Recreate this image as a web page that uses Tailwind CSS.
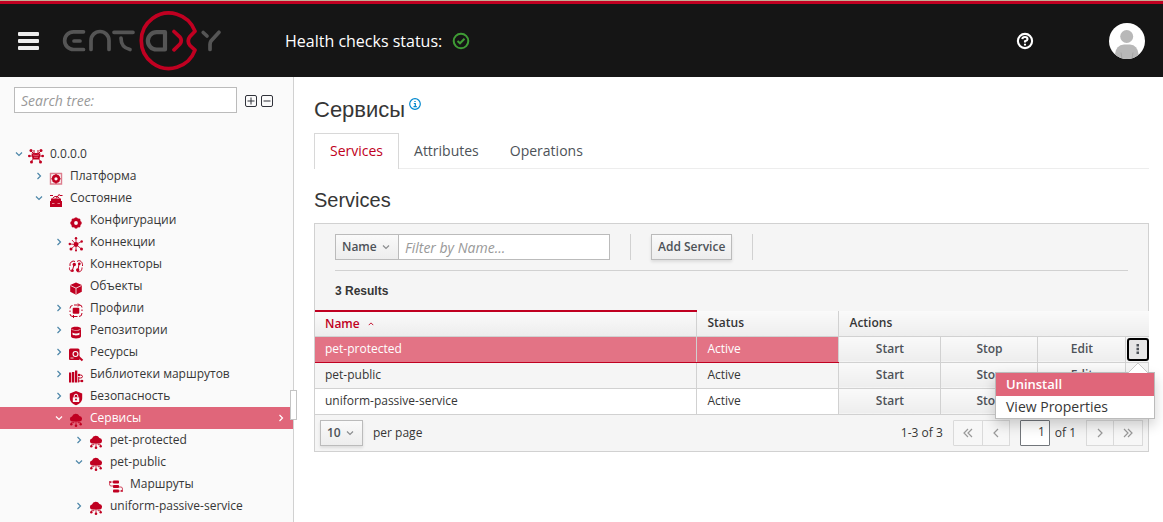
<!DOCTYPE html>
<html lang="ru">
<head>
<meta charset="utf-8">
<title>Entaxy</title>
<script src="https://cdn.jsdelivr.net/npm/@tailwindcss/browser@4"></script>
</head>
<body class="flex min-h-screen flex-col overflow-x-hidden bg-white font-['Open_Sans',sans-serif] text-xs text-[#363636]">
<svg class="hidden" aria-hidden="true">
  <symbol id="right" viewBox="0 0 8 8"><path d="M2.5 1 5.5 4 2.5 7" fill="none" stroke="currentColor" stroke-width="1.2"/></symbol>
  <symbol id="down" viewBox="0 0 8 8"><path d="M1 2.5 4 5.500 7 2.500" fill="none" stroke="currentColor" stroke-width="1.2"/></symbol>
  <symbol id="root" viewBox="0 0 16 16"><path d="M3 3 6 6M13 3 10 6M3 14 6 10M13 14 10 10M1 8H15M6 2V6M10 2V6" stroke="currentColor" stroke-width="1"/><path d="M3.500 5.500Q8 4.500 12.500 5.500L11.500 11Q8 12 4.500 11Z"/><circle cx="3" cy="2.500" r="1.500"/><circle cx="13" cy="2.500" r="1.500"/><circle cx="3.500" cy="14" r="1.500"/><circle cx="12.500" cy="14" r="1.500"/><circle cx="1.300" cy="8" r="1.300"/><circle cx="14.700" cy="8" r="1.300"/><path d="M5 7Q8 8 11 7M6 9.300H10" fill="none" stroke="#f3a5b0" stroke-width=".6"/></symbol>
  <symbol id="platform" viewBox="0 0 16 16"><path d="M2 3.500H14M2.500 3V14H13.500V3" fill="none" stroke="currentColor" stroke-width="1.400" opacity=".5"/><circle cx="8" cy="8.800" r="2.900" fill="none" stroke="currentColor" stroke-width="2.600"/><path d="M8 4.200V5M8 12.500V13.400M3.500 8.800H4.500M11.500 8.800H12.500M4.900 5.700 5.500 6.300M11.100 5.700 10.500 6.300M4.900 11.900 5.500 11.300M11.100 11.900 10.500 11.300" stroke="currentColor" stroke-width="1.600"/></symbol>
  <symbol id="state" viewBox="0 0 16 16"><path d="M4.500 6.500A4 4 0 0 1 11.500 6.500M8 6.500 11.500 2M2 3.500H5M11.500 3.500H14.500" fill="none" stroke="currentColor" stroke-width="1"/><path d="M3 6.500H13V9H14V15H2V9H3Z"/><path d="M4 11.500H6.500M9.500 11.500H12" stroke="#f3a5b0" stroke-width=".8"/></symbol>
  <symbol id="gear" viewBox="0 0 16 16"><circle cx="8" cy="9" r="3.500" fill="none" stroke="currentColor" stroke-width="3.200"/><path d="M8 3.400V5M8 13V14.600M2.400 9H4M12 9H13.600M4.100 5.100 5 6M11.900 5.100 11 6M4.100 12.900 5 12M11.900 12.900 11 12" stroke="currentColor" stroke-width="2.400"/></symbol>
  <symbol id="conn" viewBox="0 0 16 16"><path d="M8 8.500 8 2M8 8.500 13.500 5.500M8 8.500 13.500 13M8 8.500 8 14.500M8 8.500 3 13M8 8.500 2 8M8 8.500 4 4" stroke="currentColor" stroke-width=".8"/><circle cx="8" cy="8.500" r="2.400"/><circle cx="8" cy="2.200" r="1.200"/><circle cx="13.700" cy="5.500" r="1.200"/><circle cx="13.500" cy="13" r="1.500"/><circle cx="8" cy="14.600" r="1"/><circle cx="3" cy="13" r="1.500"/><circle cx="1.800" cy="8" r="1.200"/></symbol>
  <symbol id="connector" viewBox="0 0 16 16"><path d="M7 3.500A3.500 4 0 0 0 2 8M1.500 9.500C1 13 4 14.500 6 12.500M9 3.500C12 1 15 4.500 14.500 8M14 9.500C14 13 12 14.500 9 13.500M6 7 4.500 12M11 6 10 12" fill="none" stroke="currentColor" stroke-width="1"/><circle cx="6.300" cy="6.500" r="1.700"/><circle cx="11.300" cy="5.800" r="1.400"/><circle cx="9.700" cy="12" r="1.700"/><circle cx="4.300" cy="12.500" r="1.200"/></symbol>
  <symbol id="cube" viewBox="0 0 16 16"><path d="M8 2.500 13.800 5V11.800L8 14.800 2.200 11.800V5Z"/><path d="M2.500 5.500 8 8.200 13.500 5.500M8 8.200V14.500" fill="none" stroke="#fafafa" stroke-width=".8"/></symbol>
  <symbol id="profile" viewBox="0 0 16 16"><rect x="4.700" y="5.700" width="6.600" height="6" rx="1"/><path d="M6 3H11.500Q14 3 14 5.500M14 7.500V9M14 11Q14 14.500 11 14.500M9.500 14.500H5Q2 14.500 2 12M2 10V8.500M2 6.500Q2 3.500 4.500 3.500M10 1.500 11.500 3 10 4.500M6 13 4.500 14.500 6 16" fill="none" stroke="currentColor" stroke-width="1"/></symbol>
  <symbol id="repo" viewBox="0 0 16 16"><path d="M3 4.500C3 2 13 2 13 4.500V12.500C13 15 3 15 3 12.500Z"/><path d="M3.500 5C5 6.500 11 6.500 12.500 5V5.600C11 7.200 5 7.200 3.500 5.600ZM4.500 8.500C6 9.800 10 9.800 11.500 8.500V10.500C10 11.700 6 11.700 4.500 10.500Z" fill="#fafafa"/></symbol>
  <symbol id="res" viewBox="0 0 16 16"><path d="M1 4Q1 2.500 2.500 2.500H10Q11.500 2.500 11.500 4V14H2Q1 14 1 13Z"/><circle cx="7.500" cy="8" r="3" fill="#fafafa"/><circle cx="7.500" cy="8" r="1.900"/><path d="M10.500 10.800 14.500 14.500" stroke="currentColor" stroke-width="2"/><path d="M2.500 12H5.500" stroke="#fafafa" stroke-width=".8"/></symbol>
  <symbol id="lib" viewBox="0 0 16 16"><path d="M1 4.500H3.300V14.500H1ZM4 4H6.300V14.500H4ZM7 2.500H9.300V14.500H7Z"/><path d="M10 7H12.500Q14.500 7 14.500 8.500T12.500 10H11M10 13H14M10.700 9V14.500" fill="none" stroke="currentColor" stroke-width="1"/><circle cx="14" cy="13" r="1.300"/><circle cx="11" cy="7" r="1.200"/></symbol>
  <symbol id="shield" viewBox="0 0 16 16"><path d="M8 1 14.200 3.500V8C14.200 12 11 14.200 8 15.300 5 14.200 1.800 12 1.800 8V3.500Z"/><rect x="4.800" y="7.200" width="6.400" height="4.800" rx=".5" fill="#fafafa"/><path d="M6.200 7V6a1.800 1.800 0 0 1 3.600 0V7" fill="none" stroke="#fafafa" stroke-width="1"/><circle cx="8" cy="9.600" r="1"/></symbol>
  <symbol id="cloud" viewBox="0 0 16 16"><path d="M4 9.500A2.600 2.600 0 0 1 4 4.400 4 4 0 0 1 11.400 4 2.800 2.800 0 0 1 12 9.500Z"/><path d="M8 9V13M6 9.500V10.700H3.500V12M10 9.500V10.700H12.500V12" fill="none" stroke="currentColor" stroke-width=".8"/><circle cx="3.300" cy="12.300" r="1.200"/><circle cx="8" cy="13.800" r="1.300"/><circle cx="12.700" cy="12.300" r="1.200"/></symbol>
  <symbol id="route" viewBox="0 0 16 16"><rect x="5" y="2.500" width="6" height="3" rx=".8"/><rect x="5" y="7" width="6" height="3" rx=".8"/><rect x="5" y="11.500" width="6" height="3" rx=".8"/><path d="M5 4H3Q1.500 4 1.500 6T3 8H5M11 9H13Q14.500 9 14.500 11T13 13H11" fill="none" stroke="currentColor" stroke-width=".7"/><circle cx="2" cy="4" r=".9"/><circle cx="14" cy="13" r=".9"/></symbol>
</svg>

<header class="flex h-[77px] shrink-0 items-center border-t border-[#bfae93] bg-[#151515]">
  <div class="flex w-full items-center self-stretch border-t-3 border-[#c00021]">
    <button type="button" aria-label="Menu" class="ml-4.5 flex w-[21px] flex-col gap-[3px]"><span class="h-1 w-full rounded-[1px] bg-[#ededed]"></span><span class="h-1 w-full rounded-[1px] bg-[#ededed]"></span><span class="h-1 w-full rounded-[1px] bg-[#ededed]"></span></button>
    <a href="#" aria-label="Entaxy" class="ml-5.5"><svg class="h-16 w-[164px]" viewBox="61 9 164 64" fill="none" stroke="#555" stroke-width="3.700" stroke-linecap="round" stroke-linejoin="round">
      <path d="M83.500 31.800H73.500a8.800 8.800 0 0 0 0 17.700H83.500M74 41H80M91 49.500V40.500a9 9 0 0 1 18 0V49.500M114 32.300H133M121 38c0 7 3 10 9 11.500M203.200 32.500 207 36M219 32.300 211 41Q210 42.500 210 44.500V49.500"/>
      <path d="M165 32.200H156.500a8.600 8.600 0 0 0 0 17.300H165Z" stroke-width="4.200"/>
      <path d="M174 31.500 180 37.200Q182.500 40.500 180 44L174 49.800M195 31.200A27.700 27.700 0 1 0 195 50.200L190 45.500Q186.500 40.800 190 36.500Z" stroke="#c00021"/>
    </svg></a>
    <p class="ml-[60px] text-base text-white">Health checks status:</p>
    <svg class="ml-2.5 size-4.5" viewBox="0 0 18 18" fill="none" stroke="#3f9c35" stroke-width="2"><circle cx="9" cy="9" r="7.300"/><path d="M5.500 9 8 11.300 12.500 6.800"/></svg>
    <button type="button" aria-label="Help" class="mr-[75px] ml-auto"><svg class="block size-4.5" viewBox="0 0 18 18" fill="none" stroke="#fff" stroke-width="2.100"><circle cx="9" cy="9" r="7.100"/><path d="M6.300 7.200Q6.500 5 9 5T11.500 7.200Q11.500 8.500 9 9.300V10.500"/><path d="M9 11.700V13.500"/></svg></button>
    <button type="button" aria-label="User" class="mr-4.5"><svg class="block size-9" viewBox="0 0 36 36"><defs><clipPath id="av"><circle cx="18" cy="18" r="18"/></clipPath></defs><g clip-path="url(#av)"><rect width="36" height="36" fill="#fff"/><circle cx="17.700" cy="13.500" r="6.500" fill="#b8b8b8"/><path d="M6 36V31Q7 22 15 21.500H21Q28.500 22 29.500 31V36Z" fill="#b8b8b8"/><path d="M12 29.500 13 36M24 29.500 23 36" stroke="#a5a5a5"/></g></svg></button>
  </div>
</header>

<div class="flex grow">
  <aside class="relative w-[294px] shrink-0 border-r border-[#d1d1d1] bg-[#fafafa] pt-2.5 text-[#363636]">
    <div class="flex items-center pl-3.5">
      <input type="text" aria-label="Search tree" placeholder="Search tree:" class="h-[26px] w-[223px] border border-[#bbb] bg-white px-1.5 text-sm placeholder:text-[#999] placeholder:italic">
      <button type="button" aria-label="Expand all" class="ml-2 pt-0.5"><svg class="block size-3" viewBox="0 0 12 12" fill="none" stroke="#30323a"><rect x=".5" y=".5" width="11" height="11" rx="1.500"/><path d="M2.500 6H9.500M6 2.500V9.500"/></svg></button>
      <button type="button" aria-label="Collapse all" class="ml-1 pt-0.5"><svg class="block size-3" viewBox="0 0 12 12" fill="none" stroke="#30323a"><rect x=".5" y=".5" width="11" height="11" rx="1.500"/><path d="M2.500 6H9.500"/></svg></button>
    </div>
    <ul role="tree" class="mt-[30px] [&>li]:flex [&>li]:h-[22px] [&>li]:items-center [&>li>svg:first-child]:mr-[5px] [&>li>svg:first-child]:size-2 [&>li>svg:first-child]:text-[#4c86a8] [&>li>svg:nth-child(2)]:mt-1 [&>li>svg:nth-child(2)]:mr-1.5 [&>li>svg:nth-child(2)]:size-4 [&>li>svg:nth-child(2)]:fill-[#c00021] [&>li>svg:nth-child(2)]:text-[#c00021]">
      <li role="treeitem" class="pl-[15px]"><svg><use href="#down"/></svg><svg><use href="#root"/></svg>0.0.0.0</li>
      <li role="treeitem" class="pl-[35px]"><svg><use href="#right"/></svg><svg><use href="#platform"/></svg>Платформа</li>
      <li role="treeitem" class="pl-[35px]"><svg><use href="#down"/></svg><svg><use href="#state"/></svg>Состояние</li>
      <li role="treeitem" class="pl-[55px]"><svg></svg><svg><use href="#gear"/></svg>Конфигурации</li>
      <li role="treeitem" class="pl-[55px]"><svg><use href="#right"/></svg><svg><use href="#conn"/></svg>Коннекции</li>
      <li role="treeitem" class="pl-[55px]"><svg></svg><svg><use href="#connector"/></svg>Коннекторы</li>
      <li role="treeitem" class="pl-[55px]"><svg></svg><svg><use href="#cube"/></svg>Объекты</li>
      <li role="treeitem" class="pl-[55px]"><svg><use href="#right"/></svg><svg><use href="#profile"/></svg>Профили</li>
      <li role="treeitem" class="pl-[55px]"><svg><use href="#right"/></svg><svg><use href="#repo"/></svg>Репозитории</li>
      <li role="treeitem" class="pl-[55px]"><svg><use href="#right"/></svg><svg><use href="#res"/></svg>Ресурсы</li>
      <li role="treeitem" class="pl-[55px]"><svg><use href="#right"/></svg><svg><use href="#lib"/></svg>Библиотеки маршрутов</li>
      <li role="treeitem" class="pl-[55px]"><svg><use href="#right"/></svg><svg><use href="#shield"/></svg>Безопасность</li>
      <li role="treeitem" aria-selected="true" class="bg-[#e0667a] pl-[55px] text-white"><svg class="text-white!"><use href="#down"/></svg><svg><use href="#cloud"/></svg>Сервисы<svg class="mr-2 ml-auto size-2"><use href="#right"/></svg></li>
      <li role="treeitem" class="pl-[75px]"><svg><use href="#right"/></svg><svg><use href="#cloud"/></svg>pet-protected</li>
      <li role="treeitem" class="pl-[75px]"><svg><use href="#down"/></svg><svg><use href="#cloud"/></svg>pet-public</li>
      <li role="treeitem" class="pl-[95px]"><svg></svg><svg><use href="#route"/></svg>Маршруты</li>
      <li role="treeitem" class="pl-[75px]"><svg><use href="#right"/></svg><svg><use href="#cloud"/></svg>uniform-passive-service</li>
    </ul>
    <div class="absolute top-[313px] -right-1 h-[30px] w-[7px] border border-[#c4c4c4] bg-white"></div>
  </aside>

  <main class="min-w-0 grow pt-4.5 pr-3.5 pl-5">
    <h1 class="flex h-[30px] font-['Liberation_Sans',sans-serif] text-[22px] leading-[30px]">Сервисы<svg class="mt-[3px] ml-1 size-3" viewBox="0 0 12 12" fill="none" stroke="#0088ce"><circle cx="6" cy="6" r="5.300" stroke-width="1.200"/><path d="M4.800 5.500H6.300V8.700M4.500 8.700H7.800M5.300 3.500H6.700" stroke-width="1.200"/></svg></h1>
    <nav class="mt-2 flex h-9 border-b border-[#ededed] text-sm leading-[34px] text-[#4d5258]">
      <a href="#" aria-current="page" class="-mb-px border border-b-0 border-[#d8d8d8] bg-white px-[15px] text-[#c00021]">Services</a>
      <a href="#" class="border-t border-transparent px-[15px]">Attributes</a>
      <a href="#" class="border-t border-transparent px-4">Operations</a>
    </nav>
    <h2 class="mt-4 font-['Liberation_Sans',sans-serif] text-xl leading-[30px]">Services</h2>

    <section class="mt-2 border border-[#d1d1d1] bg-[#f5f5f5]">
      <div class="px-5 pt-2.5">
        <div class="flex h-[37px] items-start border-b border-[#d1d1d1]">
          <button type="button" class="flex h-[26px] w-16 items-center justify-between border border-[#bbb] bg-linear-to-b from-[#fafafa] to-[#ededed] pr-2 pl-1.5 font-semibold text-[#4d5258]">Name<svg class="size-2 text-[#8b8d8f]"><use href="#down"/></svg></button>
          <input type="text" aria-label="Filter by Name" placeholder="Filter by Name..." class="-ml-px h-[26px] w-[212px] border border-[#bbb] bg-white px-1.5 text-sm placeholder:text-[#999] placeholder:italic">
          <span class="ml-5 h-[26px] w-px bg-[#d1d1d1]"></span>
          <button type="button" class="ml-5 h-[26px] border border-[#bbb] bg-linear-to-b from-[#fafafa] to-[#ededed] px-1.5 font-semibold text-[#4d5258] shadow-[0_2px_3px_rgba(3,3,3,0.1)]">Add Service</button>
          <span class="ml-5 h-[26px] w-px bg-[#d1d1d1]"></span>
        </div>
        <h5 class="h-[39px] font-['Liberation_Sans',sans-serif] leading-10 font-bold">3 Results</h5>
      </div>

      <table class="w-[calc(100%+1px)] table-fixed border-collapse [&_td]:h-[26px] [&_td]:border [&_td]:border-[#d1d1d1] [&_td:first-child]:border-l-0 [&_td:last-child]:border-r-0 [&_th]:h-[25px] [&_th]:border-b [&_th]:border-[#d1d1d1] [&_th]:bg-linear-to-b [&_th]:from-[#fafafa] [&_th]:to-[#ededed] [&_th]:px-2.5 [&_th]:text-left [&_th]:leading-4 [&_th]:font-semibold">
        <colgroup><col><col class="w-[142px]"><col class="w-[102px]"><col class="w-[97px]"><col class="w-[88px]"><col class="w-[23px]"></colgroup>
        <thead><tr>
          <th scope="col" class="border-t-2 border-t-[#c00021]! text-[#c00021]">Name<svg class="mb-0.5 ml-2 inline size-1.5 rotate-180 align-middle"><use href="#down"/></svg></th>
          <th scope="col" class="border-x border-[#d1d1d1]">Status</th>
          <th scope="col" colspan="4">Actions</th>
        </tr></thead>
        <tbody>
          <tr>
            <td class="border-b-[#c00021]! bg-[#e37385] px-2.5 text-white">pet-protected</td><td class="border-b-[#c00021]! bg-[#e37385] px-2.5 text-white">Active</td>
            <td class="bg-linear-to-b from-[#fafafa] to-[#ededed]"><button type="button" class="w-full font-semibold text-[#4d5258]">Start</button></td>
            <td class="bg-linear-to-b from-[#fafafa] to-[#ededed]"><button type="button" class="w-full font-semibold text-[#4d5258]">Stop</button></td>
            <td class="bg-linear-to-b from-[#fafafa] to-[#ededed]"><button type="button" class="w-full font-semibold text-[#4d5258]">Edit</button></td>
            <td class="bg-[#f5f5f5]">
              <div class="relative pl-px">
                <button type="button" aria-label="More actions" aria-expanded="true" class="flex h-[23px] w-[22px] items-center justify-center rounded-[3px] border-2 border-black bg-[#e6e6e6]"><svg class="h-2.5 w-1" viewBox="0 0 4 10" fill="#4d5258"><path d="M.5 0h2.500v2.500H.5zM.5 3.700h2.500v2.500H.5zM.5 7.400h2.500v2.500H.5z"/></svg></button>
                <svg class="absolute top-6 left-px z-20 h-[11px] w-[22px]" viewBox="0 0 22 11"><path d="M1 11 11 1 21 11" fill="#fff" stroke="#c8c8c8"/></svg>
                <ul role="menu" class="absolute top-[34px] -right-[6px] z-10 w-40 border border-[#bbb] bg-white text-sm leading-[22px] shadow-[0_6px_12px_rgba(3,3,3,0.18)]">
                  <li><button type="button" role="menuitem" class="block w-full bg-[#e0667a] px-2.5 text-left text-[13px] leading-[23px] font-semibold text-white">Uninstall</button></li>
                  <li><button type="button" role="menuitem" class="block w-full px-2.5 text-left">View Properties</button></li>
                </ul>
              </div>
            </td>
          </tr>
          <tr>
            <td class="px-2.5">pet-public</td><td class="px-2.5">Active</td>
            <td class="bg-linear-to-b from-[#fafafa] to-[#ededed]"><button type="button" class="w-full font-semibold text-[#4d5258]">Start</button></td>
            <td class="bg-linear-to-b from-[#fafafa] to-[#ededed]"><button type="button" class="w-full font-semibold text-[#4d5258]">Stop</button></td>
            <td class="bg-linear-to-b from-[#fafafa] to-[#ededed]"><button type="button" class="w-full font-semibold text-[#4d5258]">Edit</button></td>
            <td></td>
          </tr>
          <tr>
            <td class="bg-white px-2.5">uniform-passive-service</td><td class="bg-white px-2.5">Active</td>
            <td class="bg-linear-to-b from-[#fafafa] to-[#ededed]"><button type="button" class="w-full font-semibold text-[#4d5258]">Start</button></td>
            <td class="bg-linear-to-b from-[#fafafa] to-[#ededed]"><button type="button" class="w-full font-semibold text-[#4d5258]">Stop</button></td>
            <td class="bg-linear-to-b from-[#fafafa] to-[#ededed]"><button type="button" class="w-full font-semibold text-[#4d5258]">Edit</button></td>
            <td></td>
          </tr>
        </tbody>
      </table>

      <footer class="flex items-center p-[5px]">
        <button type="button" aria-label="Rows per page" class="flex h-[26px] w-[43px] items-center justify-between border border-[#bbb] bg-linear-to-b from-[#fafafa] to-[#ededed] pr-2 pl-1.5 font-semibold text-[#4d5258] shadow-[0_2px_3px_rgba(3,3,3,0.1)]">10<svg class="size-2 text-[#8b8d8f]"><use href="#down"/></svg></button>
        <span class="ml-2.5">per page</span>
        <span class="ml-auto">1-3 of 3</span>
        <div class="ml-2.5 flex text-[#999]">
          <button type="button" aria-label="First page" class="flex h-[26px] w-[30px] items-center justify-center rounded-l-[1px] border border-[#dadada] bg-[#f7f7f7]"><svg class="size-2.5" viewBox="0 0 10 10" fill="none" stroke="currentColor" stroke-width="1.200"><path d="M5 1 1 5 5 9M9 1 5 5 9 9"/></svg></button>
          <button type="button" aria-label="Previous page" class="-ml-px flex h-[26px] w-7 items-center justify-center border border-[#dadada] bg-[#f7f7f7]"><svg class="size-2.5" viewBox="0 0 10 10" fill="none" stroke="currentColor" stroke-width="1.200"><path d="M7 1 3 5 7 9"/></svg></button>
        </div>
        <input type="text" aria-label="Page" value="1" class="ml-2.5 h-[26px] w-[30px] rounded-[1px] border border-[#72767b] bg-white px-1 pb-0.5 text-right">
        <span class="ml-[5px]">of 1</span>
        <div class="ml-2.5 flex text-[#999]">
          <button type="button" aria-label="Next page" class="flex h-[26px] w-7 items-center justify-center border border-[#dadada] bg-[#f7f7f7]"><svg class="size-2.5" viewBox="0 0 10 10" fill="none" stroke="currentColor" stroke-width="1.200"><path d="M3 1 7 5 3 9"/></svg></button>
          <button type="button" aria-label="Last page" class="-ml-px flex h-[26px] w-[30px] items-center justify-center border border-[#dadada] bg-[#f7f7f7]"><svg class="size-2.5" viewBox="0 0 10 10" fill="none" stroke="currentColor" stroke-width="1.200"><path d="M1 1 5 5 1 9M5 1 9 5 5 9"/></svg></button>
        </div>
      </footer>
    </section>
  </main>
</div>
</body>
</html>
